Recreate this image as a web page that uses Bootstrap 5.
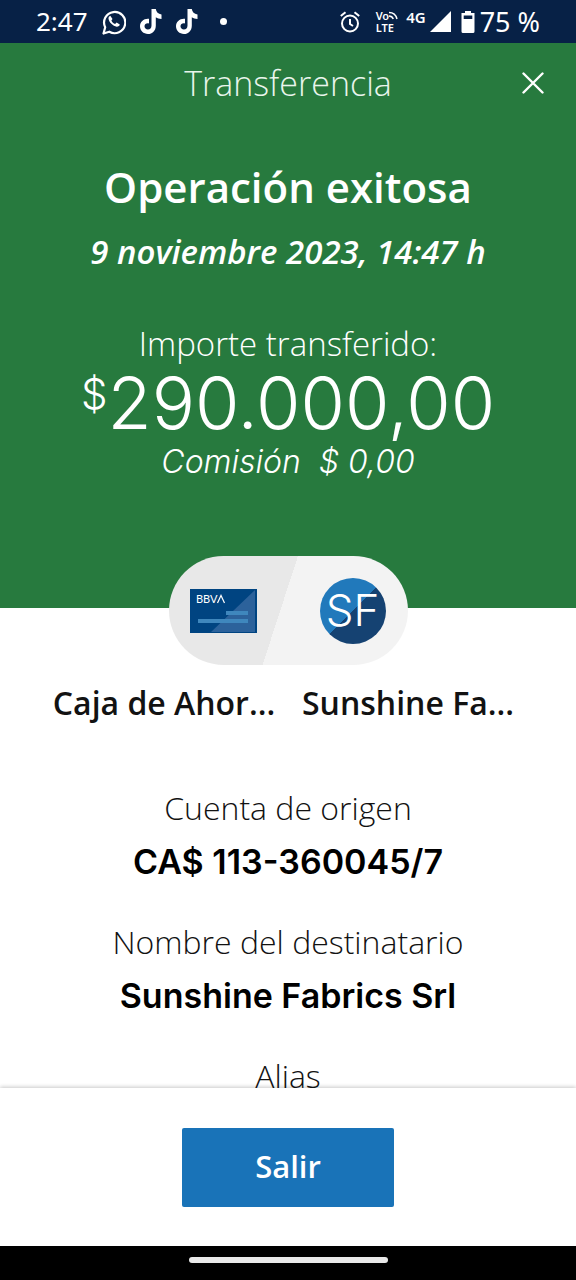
<!DOCTYPE html>
<html lang="es">
<head>
<meta charset="utf-8">
<meta name="viewport" content="width=device-width, initial-scale=1">
<title>Transferencia</title>
<link href="https://cdn.jsdelivr.net/npm/bootstrap@5.3.0/dist/css/bootstrap.min.css" rel="stylesheet">
<style>
  body { font-family: "Open Sans", "Noto Sans", sans-serif; color: #121212; background: #fff; }
  .status { background: #072146; height: 43px; font: 400 26px/43px "Noto Sans", sans-serif; }
  .status svg, .pill svg { display: block; flex: none; }
  .status-icons { gap: 14px; }
  .percent { font-size: 27px; }
  .volte { font-size: 11px; line-height: 12px; font-weight: 600; }
  .net { font-size: 15px; line-height: 34px; font-weight: 600; align-self: flex-start; }
  .hero { background: #277a3e; padding-bottom: 126px; }
  .topbar { height: 80px; }
  .topbar h1 { font-size: 34px; line-height: 40px; font-weight: 300; color: #e9f5ec; }
  .close-x { right: 20px; }
  .done { font-size: 42px; line-height: 52px; font-weight: 600; margin-top: 38px; }
  .line { font-size: 33px; line-height: 40px; }
  .thin { font-weight: 300; }
  .semi { font-weight: 600; }
  .wide { font-family: Inter, "Open Sans", sans-serif; }
  .date { margin-top: 19px; }
  .label-amount { margin-top: 52px; }
  .amount { font-size: 72px; line-height: 78px; }
  .amount sup { font-size: 42px; line-height: 40px; top: 0; vertical-align: 20px; }
  .fee { font-size: 32px; line-height: 40px; }
  .pill { width: 239px; height: 109px; margin-top: -52px; border-radius: 55px; padding: 0 22px 0 21px;
          background: linear-gradient(108deg, #e8e8e8 47%, #f3f3f3 47%); position: relative; }
  .avatar { width: 66px; height: 66px; font-size: 44px; line-height: 64px; background: linear-gradient(135deg, #2179bb 50%, #154272 50%); }
  .names { margin-top: 18px; padding: 0 46px 0 42px; font-size: 32px; line-height: 40px; }
  .detail { margin-top: 65px; display: grid; row-gap: 40px; font-size: 32px; line-height: 40px; }
  .detail dd { margin: 14px 0 0; color: #000; font-size: 34px; }
  .foot { padding: 40px 0 39px; box-shadow: 0 -1px 4px rgba(0,0,0,.22); position: relative; }
  .exit { width: 212px; height: 79px; font-size: 31px; line-height: 40px; font-weight: 600; color: #fff; background: #1973b8; border: 0; border-radius: 2px; padding: 0 0 3px; }
  .exit:hover { background: #14649f; color: #fff; }
  .gesture { height: 34px; }
  .gesture span { width: 199px; height: 6px; background: #e9e9e9; margin-bottom: 6px; }
</style>
</head>
<body class="d-flex flex-column vh-100 overflow-hidden">
  <header class="status d-flex justify-content-between align-items-center text-white flex-shrink-0 px-4">
    <div class="status-icons d-flex align-items-center ps-2 ms-1">
      <span>2:47</span>
      <svg width="24" height="26" viewBox="0 0 24 26" fill="none" stroke="#fff" stroke-width="2.2"><path d="M1.500 24.500l1.700-6.200A10.600 10.600 0 1 1 7.300 22.700z" stroke-linejoin="round"/><path d="M8.300 6.800c-1 .3-2 1.500-1.800 3 .5 3.500 4.500 7.400 8.200 7.900 1.600.1 2.900-.8 3.100-2.200l-3.200-1.900-1.500 1.500c-1.600-.6-3-2-3.700-3.600l1.100-1.500z" fill="#fff" stroke="none"/></svg>
      <svg width="22" height="25" viewBox="0 0 22 25" fill="#fff"><path d="M11.500 0h4.300c.4 3 2.400 5 5.700 5.400v4.500c-2.200 0-4.100-.6-5.700-1.700v8.500c0 5-3.500 8.300-7.800 8.300C3.400 25 0 21.600 0 17.300c0-4.700 4-8.100 9-7.500v4.600c-2.400-.6-4.500.6-4.500 2.800 0 1.900 1.500 3.300 3.400 3.300 2.200 0 3.600-1.500 3.600-4z"/></svg>
      <svg width="22" height="25" viewBox="0 0 22 25" fill="#fff"><path d="M11.500 0h4.300c.4 3 2.400 5 5.700 5.400v4.500c-2.200 0-4.100-.6-5.700-1.700v8.500c0 5-3.500 8.300-7.800 8.300C3.400 25 0 21.600 0 17.300c0-4.700 4-8.100 9-7.500v4.600c-2.400-.6-4.500.6-4.500 2.800 0 1.900 1.500 3.300 3.400 3.300 2.200 0 3.600-1.500 3.600-4z"/></svg>
      <svg class="ms-2" width="7" height="7" viewBox="0 0 6 6"><circle cx="3" cy="3" r="3" fill="#fff"/></svg>
    </div>
    <div class="d-flex align-items-center pe-2 me-1">
      <svg class="me-3" width="20" height="22" viewBox="0 0 20 22" fill="none" stroke="#fff" stroke-width="2"><circle cx="10" cy="12.500" r="8"/><path d="M10 8v5l3 2M.800 5L5.500 1.200M19.200 5L14.500 1.200"/></svg>
      <div class="volte me-2">
        <div class="d-flex">Vo<svg width="9" height="10" viewBox="0 0 9 10" fill="none" stroke="#fff" stroke-width="1.500"><path d="M0 2.500c4 0 7 2.500 8 6.500M0 6c2 0 3.500 1 4.300 3"/></svg></div>
        <div>LTE</div>
      </div>
      <span class="net me-1">4G</span>
      <svg width="21" height="21" viewBox="0 0 21 21"><path d="M21 0v21H0z" fill="#fff"/></svg>
      <svg class="ms-2 ps-0 me-1" width="17" height="22" viewBox="0 0 17 22"><path d="M6 0h6v2h3.500v18.500q0 1.500-1.500 1.500H4q-1.500 0-1.500-1.500V2H6z" fill="#fff"/><path d="M4.700 4.500h8.600V8H4.700z" fill="#072146"/></svg>
      <span class="percent">75 %</span>
    </div>
  </header>

  <main class="flex-grow-1 overflow-hidden text-center">
    <section class="hero text-white">
      <div class="topbar d-flex align-items-center justify-content-center position-relative">
        <h1 class="m-0">Transferencia</h1>
        <button type="button" class="close-x btn border-0 position-absolute" aria-label="Cerrar">
          <svg class="d-block" width="22" height="22" viewBox="0 0 22 22" stroke="#fff" stroke-width="2.400" stroke-linecap="round"><path d="M1.500 1.500l19 19M20.500 1.500l-19 19"/></svg>
        </button>
      </div>
      <h2 class="done mb-0">Operación exitosa</h2>
      <p class="line semi fst-italic date mb-0">9 noviembre 2023, 14:47 h</p>
      <p class="line thin label-amount mb-0">Importe transferido:</p>
      <p class="amount wide thin mb-0"><sup>$</sup>290.000,00</p>
      <p class="fee wide thin fst-italic mb-0">Comisión &nbsp;$ 0,00</p>
    </section>

    <div class="pill d-flex align-items-center justify-content-between mx-auto">
      <svg width="67" height="44" viewBox="0 0 67 44" role="img" aria-label="BBVA"><path fill="#004481" d="M0 0h67v44H0z"/><path fill="#2c629b" d="M65 1v42H21z"/><path fill="#3f87bd" d="M36 22h22v4H36zM8 30h50v4H8z"/><text x="6" y="14" font-family="Lato" font-size="11" fill="#fff">BBV</text><path d="M27.500 14l3.500-7.500 3.500 7.500" fill="none" stroke="#fff" stroke-width="1.200"/></svg>
      <div class="avatar wide rounded-circle text-white thin">SF</div>
    </div>

    <div class="names row g-0 semi">
      <div class="col-6 text-nowrap">Caja de Ahor...</div>
      <div class="col-6 text-nowrap">Sunshine Fa...</div>
    </div>

    <dl class="detail mb-0">
      <div><dt class="thin">Cuenta de origen</dt><dd class="wide semi">CA$ 113-360045/7</dd></div>
      <div><dt class="thin">Nombre del destinatario</dt><dd class="wide semi">Sunshine Fabrics Srl</dd></div>
      <div><dt class="thin">Alias</dt></div>
    </dl>
  </main>

  <footer class="foot bg-white text-center flex-shrink-0">
    <button type="button" class="exit btn">Salir</button>
  </footer>
  <div class="gesture bg-black d-flex align-items-center justify-content-center flex-shrink-0"><span class="rounded-pill"></span></div>
<script src="https://cdn.jsdelivr.net/npm/bootstrap@5.3.0/dist/js/bootstrap.bundle.min.js"></script>
</body>
</html>
